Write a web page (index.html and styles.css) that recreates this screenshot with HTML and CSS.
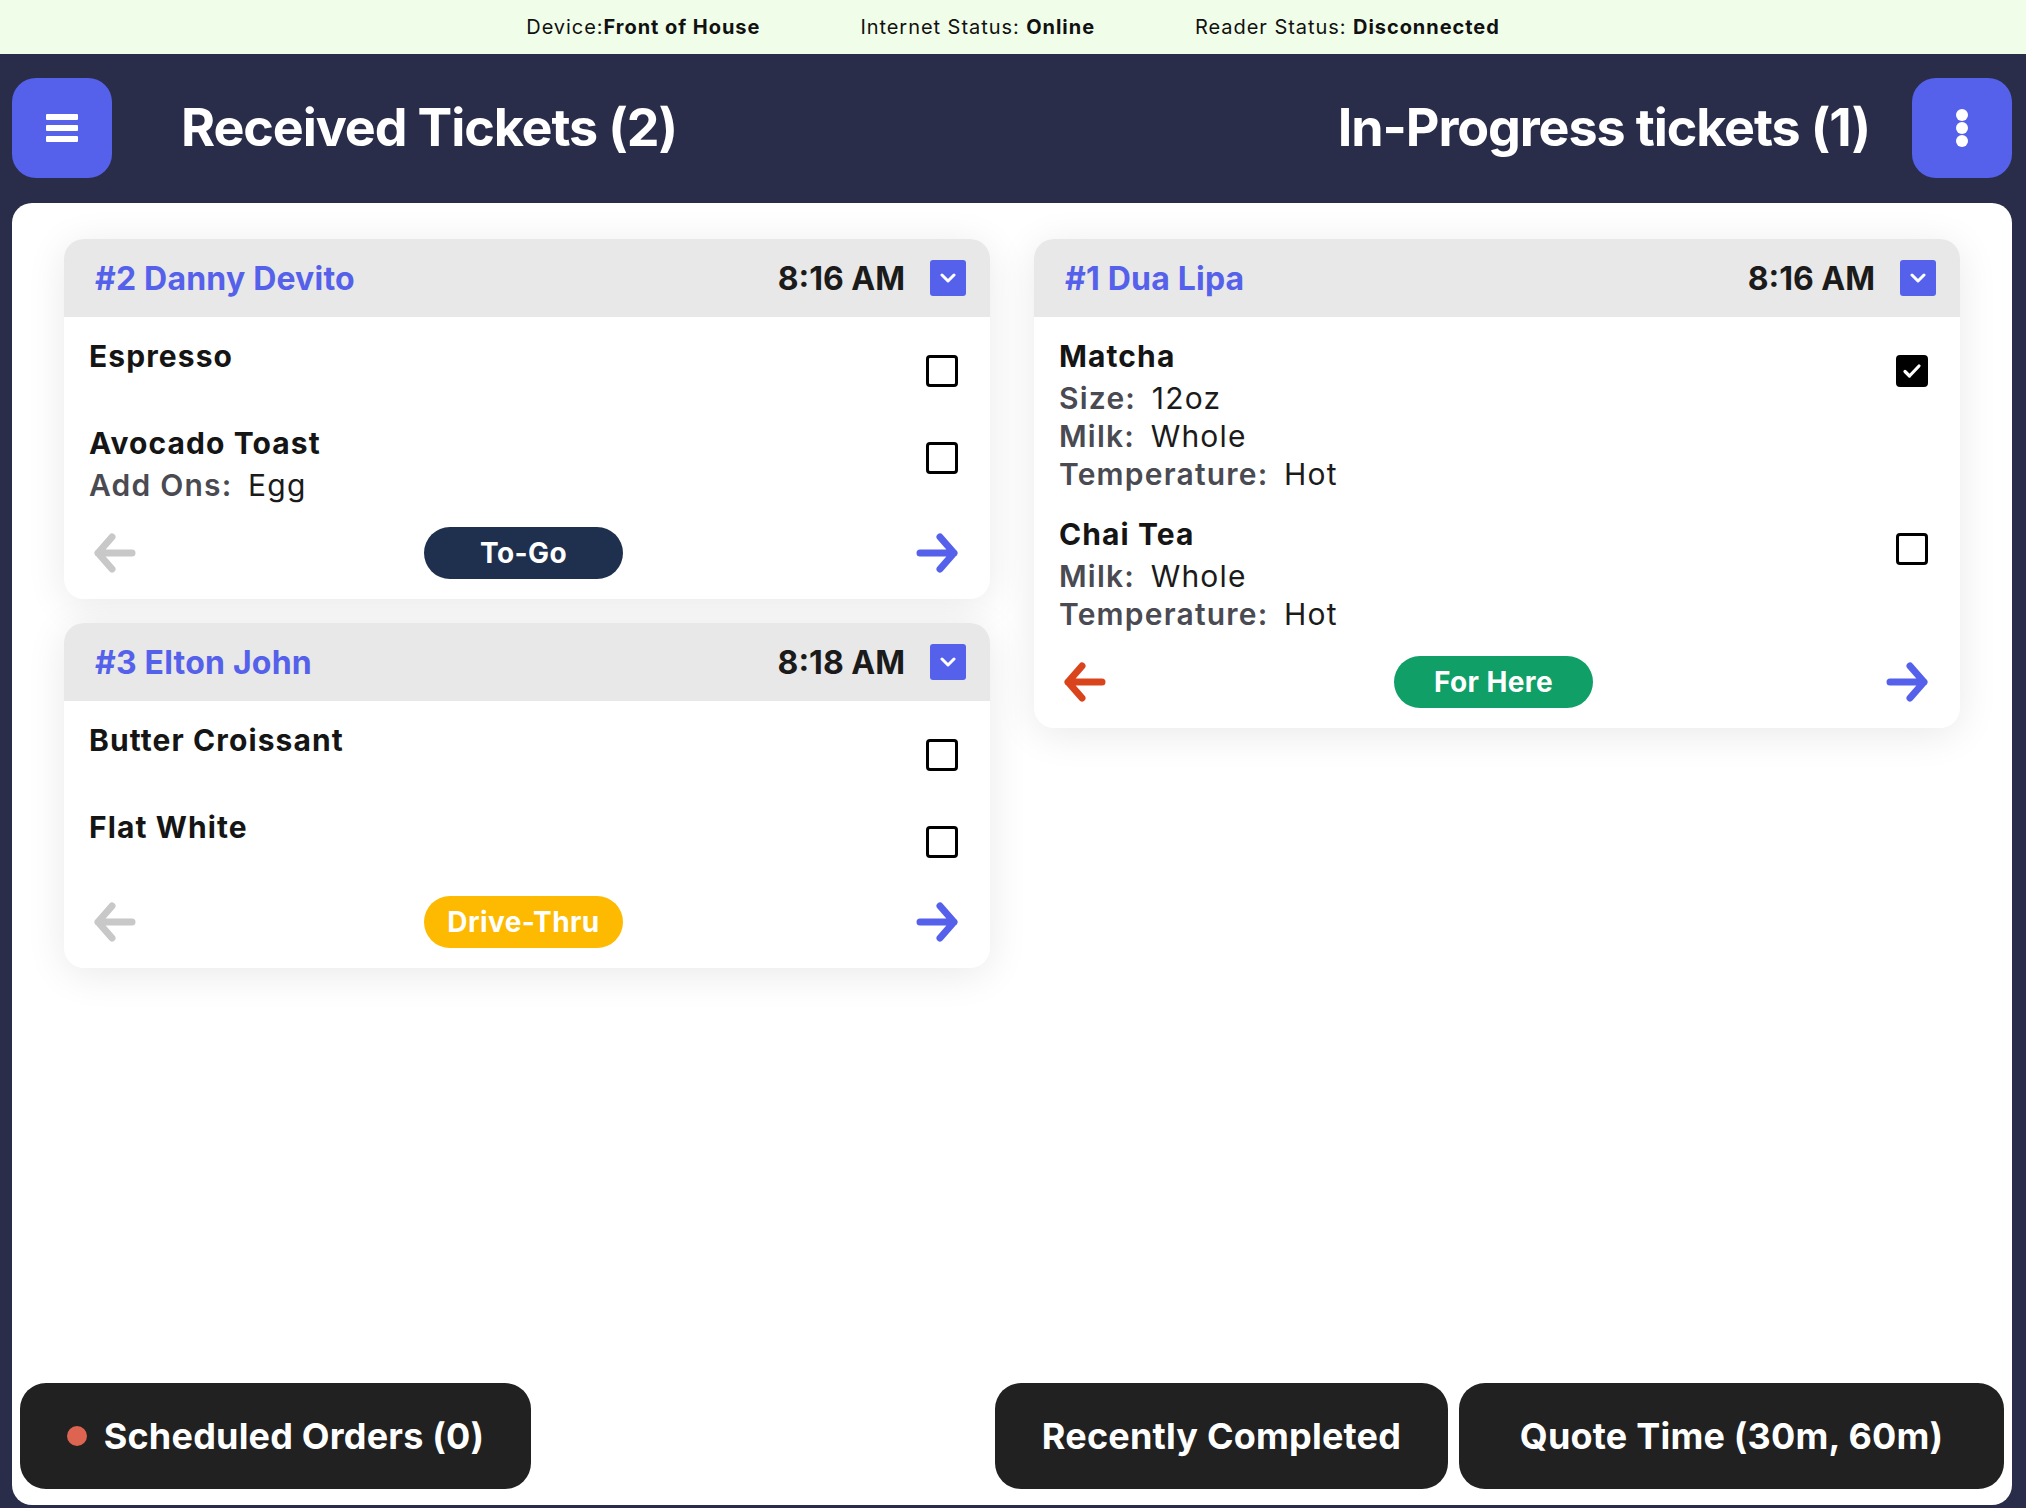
FILE: index.html
```html
<!DOCTYPE html>
<html lang="en">
<head>
<meta charset="utf-8">
<title>Tickets</title>
<link rel="stylesheet" href="styles.css">
</head>
<body>
<div class="app">
  <div class="status">
    <span>Device:<b>Front of House</b></span>
    <span>Internet Status: <b>Online</b></span>
    <span>Reader Status: <b>Disconnected</b></span>
  </div>
  <header class="topbar">
    <button class="icon-btn" aria-label="menu">
      <svg width="32" height="28" viewBox="0 0 32 28"><rect x="0" y="0" width="32" height="6" rx="1" fill="#fff"/><rect x="0" y="11" width="32" height="6" rx="1" fill="#fff"/><rect x="0" y="22" width="32" height="6" rx="1" fill="#fff"/></svg>
    </button>
    <h1 class="col-title left">Received Tickets (2)</h1>
    <h1 class="col-title right">In-Progress tickets (1)</h1>
    <button class="icon-btn" aria-label="more">
      <svg width="14" height="38" viewBox="0 0 14 38"><circle cx="7" cy="6" r="6" fill="#fff"/><circle cx="7" cy="19" r="6" fill="#fff"/><circle cx="7" cy="32" r="6" fill="#fff"/></svg>
    </button>
  </header>
  <main class="panel">
    <div class="board">
      <div class="column">
        <section class="card">
          <div class="card-head">
            <span class="ticket-name">#2 Danny Devito</span>
            <span class="ticket-time">8:16 AM</span>
            <span class="dropdown"><svg width="16" height="10" viewBox="0 0 16 10"><path d="M2 2l6 6 6-6" fill="none" stroke="#fff" stroke-width="3" stroke-linecap="round" stroke-linejoin="round"/></svg></span>
          </div>
          <div class="card-body">
            <div class="item">
              <div class="item-text"><div class="item-name">Espresso</div></div>
              <span class="check"></span>
            </div>
            <div class="item">
              <div class="item-text">
                <div class="item-name">Avocado Toast</div>
                <div class="attr"><span class="attr-label">Add Ons:</span> Egg</div>
              </div>
              <span class="check"></span>
            </div>
            <div class="card-foot">
              <span class="arrow back gray"><svg width="44" height="42" viewBox="0 0 44 42"><path d="M5 21L19 5M5 21l14 16M5 21h34" fill="none" stroke="currentColor" stroke-width="7" stroke-linecap="round" stroke-linejoin="round"/></svg></span>
              <span class="pill navy">To-Go</span>
              <span class="arrow fwd"><svg width="44" height="42" viewBox="0 0 44 42"><path d="M39 21L25 5M39 21L25 37M39 21H5" fill="none" stroke="currentColor" stroke-width="7" stroke-linecap="round" stroke-linejoin="round"/></svg></span>
            </div>
          </div>
        </section>
        <section class="card">
          <div class="card-head">
            <span class="ticket-name">#3 Elton John</span>
            <span class="ticket-time">8:18 AM</span>
            <span class="dropdown"><svg width="16" height="10" viewBox="0 0 16 10"><path d="M2 2l6 6 6-6" fill="none" stroke="#fff" stroke-width="3" stroke-linecap="round" stroke-linejoin="round"/></svg></span>
          </div>
          <div class="card-body">
            <div class="item">
              <div class="item-text"><div class="item-name">Butter Croissant</div></div>
              <span class="check"></span>
            </div>
            <div class="item">
              <div class="item-text"><div class="item-name">Flat White</div></div>
              <span class="check"></span>
            </div>
            <div class="card-foot">
              <span class="arrow back gray"><svg width="44" height="42" viewBox="0 0 44 42"><path d="M5 21L19 5M5 21l14 16M5 21h34" fill="none" stroke="currentColor" stroke-width="7" stroke-linecap="round" stroke-linejoin="round"/></svg></span>
              <span class="pill yellow">Drive-Thru</span>
              <span class="arrow fwd"><svg width="44" height="42" viewBox="0 0 44 42"><path d="M39 21L25 5M39 21L25 37M39 21H5" fill="none" stroke="currentColor" stroke-width="7" stroke-linecap="round" stroke-linejoin="round"/></svg></span>
            </div>
          </div>
        </section>
      </div>
      <div class="column">
        <section class="card">
          <div class="card-head">
            <span class="ticket-name">#1 Dua Lipa</span>
            <span class="ticket-time">8:16 AM</span>
            <span class="dropdown"><svg width="16" height="10" viewBox="0 0 16 10"><path d="M2 2l6 6 6-6" fill="none" stroke="#fff" stroke-width="3" stroke-linecap="round" stroke-linejoin="round"/></svg></span>
          </div>
          <div class="card-body">
            <div class="item">
              <div class="item-text">
                <div class="item-name">Matcha</div>
                <div class="attr"><span class="attr-label">Size:</span> 12oz</div>
                <div class="attr"><span class="attr-label">Milk:</span> Whole</div>
                <div class="attr"><span class="attr-label">Temperature:</span> Hot</div>
              </div>
              <span class="check checked"><svg width="20" height="16" viewBox="0 0 20 16"><path d="M3 8.5l4.5 4.5L17 3" fill="none" stroke="#fff" stroke-width="3.2" stroke-linecap="round" stroke-linejoin="round"/></svg></span>
            </div>
            <div class="item">
              <div class="item-text">
                <div class="item-name">Chai Tea</div>
                <div class="attr"><span class="attr-label">Milk:</span> Whole</div>
                <div class="attr"><span class="attr-label">Temperature:</span> Hot</div>
              </div>
              <span class="check"></span>
            </div>
            <div class="card-foot">
              <span class="arrow back red"><svg width="44" height="42" viewBox="0 0 44 42"><path d="M5 21L19 5M5 21l14 16M5 21h34" fill="none" stroke="currentColor" stroke-width="7" stroke-linecap="round" stroke-linejoin="round"/></svg></span>
              <span class="pill green">For Here</span>
              <span class="arrow fwd"><svg width="44" height="42" viewBox="0 0 44 42"><path d="M39 21L25 5M39 21L25 37M39 21H5" fill="none" stroke="currentColor" stroke-width="7" stroke-linecap="round" stroke-linejoin="round"/></svg></span>
            </div>
          </div>
        </section>
      </div>
    </div>
    <div class="bottom-bar">
      <button class="dark-btn scheduled"><span class="dot"></span>Scheduled Orders (0)</button>
      <div class="right-group">
        <button class="dark-btn recent">Recently Completed</button>
        <button class="dark-btn quote">Quote Time (30m, 60m)</button>
      </div>
    </div>
  </main>
</div>
</body>
</html>
```
FILE: styles.css
```css
* { box-sizing: border-box; }
html, body { margin: 0; padding: 0; }
body {
  background: #2a2d4a;
  font-family: Inter, "Noto Sans", "Liberation Sans", sans-serif;
  color: #1b1b1b;
}
.app {
  height: 100vh;
  display: flex;
  flex-direction: column;
}
.status {
  height: 54px;
  flex: none;
  background: #f0fde9;
  display: flex;
  justify-content: center;
  align-items: center;
  gap: 100px;
  font-size: 20px;
  color: #111;
  letter-spacing: 0.95px;
}
.status b { font-weight: 700; }
.topbar {
  flex: none;
  display: flex;
  align-items: center;
  padding: 24px 14px 25px 12px;
}
.icon-btn {
  width: 100px;
  height: 100px;
  border: none;
  border-radius: 24px;
  background: #5561ea;
  display: flex;
  align-items: center;
  justify-content: center;
  padding: 0;
  flex: none;
}
.col-title {
  margin: 0;
  color: #fff;
  font-size: 52px;
  font-weight: 700;
  letter-spacing: -1.1px;
  line-height: 1;
}
.col-title.left { margin-left: 69px; flex: 1; }
.col-title.right { margin-right: 42px; }
.panel {
  flex: 1;
  margin: 0 14px 3px 12px;
  background: #fff;
  border-radius: 20px;
  display: flex;
  flex-direction: column;
  overflow: hidden;
}
.board {
  flex: 1;
  padding: 36px 52px;
  display: grid;
  grid-template-columns: 1fr 1fr;
  column-gap: 44px;
  align-items: start;
}
.column {
  display: flex;
  flex-direction: column;
  gap: 24px;
}
.card {
  background: #fff;
  border-radius: 20px;
  overflow: hidden;
  box-shadow: 0 6px 40px rgba(0, 0, 0, 0.09);
}
.card-head {
  height: 78px;
  background: #e8e8e8;
  display: flex;
  align-items: center;
  padding: 0 24px 0 31px;
}
.ticket-name {
  flex: 1;
  color: #5561ea;
  font-size: 32px;
  font-weight: 700;
  letter-spacing: 0.2px;
}
.ticket-time {
  font-size: 32px;
  font-weight: 700;
  color: #1b1b1b;
  margin-right: 25px;
}
.dropdown {
  width: 36px;
  height: 36px;
  background: #5561ea;
  border-radius: 3px;
  display: flex;
  align-items: center;
  justify-content: center;
}
.card-body {
  padding: 16px 32px 20px 25px;
}
.item {
  display: flex;
  justify-content: space-between;
  align-items: flex-start;
  min-height: 69px;
  margin-bottom: 18px;
}
.item-name {
  font-size: 30px;
  font-weight: 700;
  line-height: 46px;
  letter-spacing: 1.1px;
  color: #151515;
}
.attr {
  font-size: 30px;
  line-height: 38px;
  font-weight: 400;
  color: #1b1b1b;
  letter-spacing: 1.2px;
}
.attr-label {
  font-weight: 600;
  color: #4a4a52;
  margin-right: 6px;
}
.check {
  width: 32px;
  height: 32px;
  border: 3px solid #000;
  border-radius: 4px;
  margin-top: 22px;
  flex: none;
  display: flex;
  align-items: center;
  justify-content: center;
}
.check.checked { background: #000; }
.card-foot {
  padding-top: 5px;
  display: grid;
  grid-template-columns: 1fr auto 1fr;
  align-items: center;
  height: 57px;
}
.arrow { display: flex; color: #5561ea; }
.arrow.back { justify-self: start; margin-left: 4px; }
.arrow.fwd { justify-self: end; margin-right: -1px; }
.arrow.gray { color: #c8c8c8; }
.arrow.red { color: #d9441d; }
.pill {
  width: 199px;
  height: 52px;
  border-radius: 26px;
  display: flex;
  align-items: center;
  justify-content: center;
  color: #fff;
  font-size: 28px;
  font-weight: 700;
  letter-spacing: 0.4px;
}
.pill.navy { background: #1f2f4e; }
.pill.yellow { background: #fdba00; }
.pill.green { background: #0f9f67; }
.bottom-bar {
  flex: none;
  display: flex;
  justify-content: space-between;
  padding: 0 8px 16px 8px;
}
.right-group { display: flex; gap: 11px; }
.dark-btn {
  height: 106px;
  border: none;
  border-radius: 26px;
  background: #212121;
  color: #fff;
  font-family: inherit;
  font-size: 36px;
  font-weight: 700;
  letter-spacing: 0.2px;
  display: flex;
  align-items: center;
  justify-content: center;
  padding: 0;
}
.dark-btn.scheduled { width: 511px; }
.dark-btn.recent { width: 453px; }
.dark-btn.quote { width: 545px; }
.dot {
  width: 20px;
  height: 20px;
  border-radius: 50%;
  background: #dc6450;
  margin-right: 17px;
}
```
